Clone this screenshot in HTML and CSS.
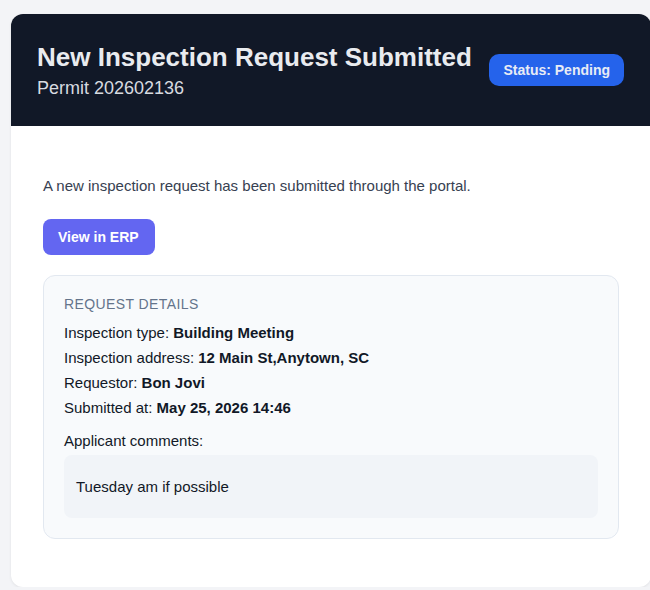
FILE: index.html
```html
<!DOCTYPE html>
<html>
<head>
<meta charset="utf-8">
<link rel="stylesheet" href="styles.css">
</head>
<body>
<div class="card">
  <div class="header">
    <div class="titles">
      <h1 class="title">New Inspection Request Submitted</h1>
      <div class="subtitle">Permit 202602136</div>
    </div>
    <span class="badge">Status: Pending</span>
  </div>
  <div class="content">
    <p class="intro">A new inspection request has been submitted through the portal.</p>
    <a class="btn" href="#">View in ERP</a>
    <div class="details">
      <div class="details-title">REQUEST DETAILS</div>
      <div class="row">Inspection type: <b>Building Meeting</b></div>
      <div class="row">Inspection address: <b>12 Main St,Anytown, SC</b></div>
      <div class="row">Requestor: <b>Bon Jovi</b></div>
      <div class="row">Submitted at: <b>May 25, 2026 14:46</b></div>
      <div class="row comments-label">Applicant comments:</div>
      <div class="comment">Tuesday am if possible</div>
    </div>
  </div>
</div>
</body>
</html>
```
FILE: styles.css
```css
html, body {
  margin: 0;
  padding: 0;
}
body {
  background: #f3f4f7;
  font-family: "Liberation Sans", Arial, sans-serif;
  color: #111827;
  padding: 14px 0 0 11px;
  overflow: hidden;
}
.card {
  width: 640px;
  background: #ffffff;
  border-radius: 12px;
  overflow: hidden;
  box-shadow: 0 1px 3px rgba(0,0,0,0.08);
}
.header {
  background: #111827;
  height: 112px;
  box-sizing: border-box;
  padding: 0 27px 0 26px;
  display: flex;
  align-items: center;
  justify-content: space-between;
}
.title {
  margin: 0;
  font-size: 26px;
  line-height: 30px;
  font-weight: bold;
  color: #e9ebef;
}
.subtitle {
  margin-top: 5px;
  font-size: 18px;
  line-height: 22px;
  color: #d8dbe0;
}
.badge {
  background: #2563eb;
  color: #e8ecf5;
  font-size: 14px;
  line-height: 16px;
  font-weight: bold;
  padding: 8px 14px;
  border-radius: 10px;
}
.content {
  padding: 49px 32px 48px 32px;
}
.intro {
  margin: 0;
  font-size: 15px;
  line-height: 22px;
  color: #374151;
}
.btn {
  display: inline-block;
  margin-top: 22px;
  background: #6366f1;
  color: #ffffff;
  text-decoration: none;
  font-size: 14px;
  line-height: 16px;
  font-weight: bold;
  padding: 10px 16px 10px 15px;
  border-radius: 8px;
}
.details {
  margin-top: 20px;
  background: #f8fafc;
  border: 1px solid #e2e8f0;
  border-radius: 12px;
  padding: 20px 20px 20px 20px;
}
.details-title {
  font-size: 14px;
  line-height: 17px;
  letter-spacing: 0.4px;
  color: #64748b;
  margin-bottom: 7px;
}
.row {
  font-size: 15px;
  line-height: 25px;
  color: #111827;
}
.row b {
  font-weight: bold;
}
.comments-label {
  margin-top: 8px;
}
.comment {
  margin-top: 2px;
  background: #f1f4f8;
  border-radius: 8px;
  padding: 21px 12px 20px 12px;
  font-size: 15px;
  line-height: 22px;
  color: #111827;
}
```
